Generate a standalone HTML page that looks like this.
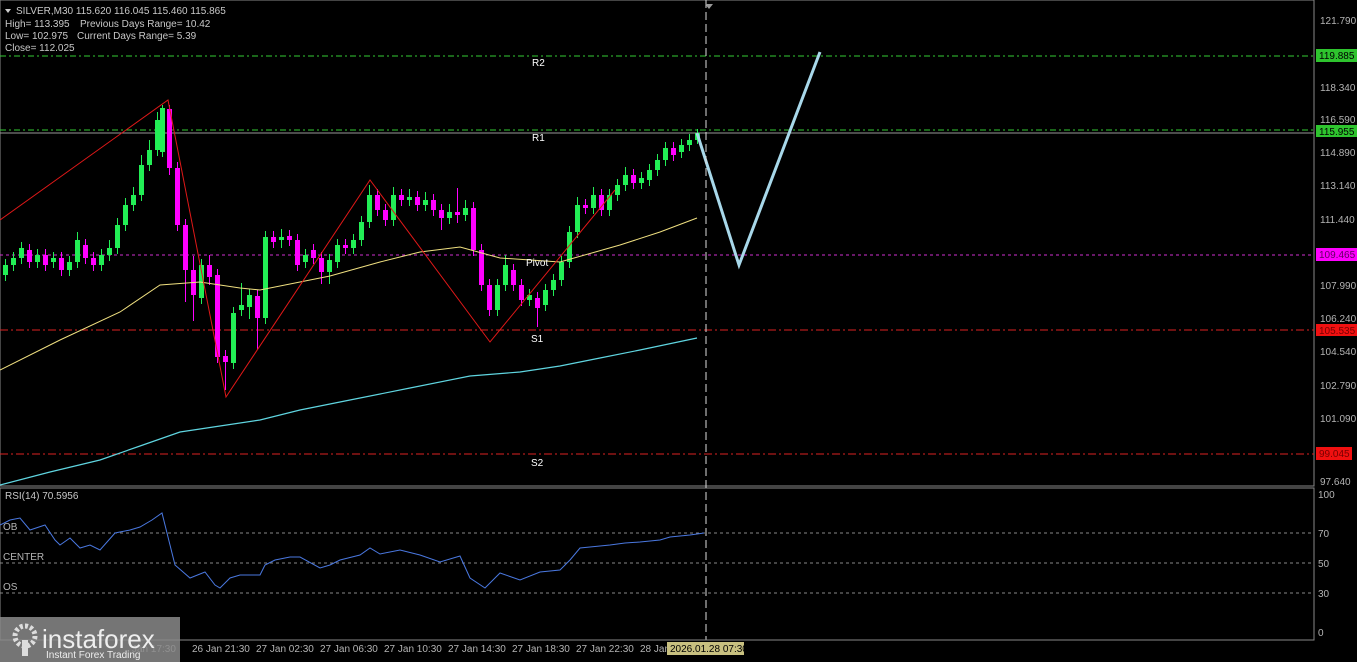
<!DOCTYPE html><html><head><meta charset="utf-8"><style>
body{margin:0;background:#000;width:1357px;height:662px;overflow:hidden;font-family:"Liberation Sans",sans-serif}
svg{position:absolute;left:0;top:0}
.t{fill:#c8c8c8;font-size:10px}
.ax{fill:#b4b4b4;font-size:10px}
</style></head><body>
<svg width="1357" height="662" xmlns="http://www.w3.org/2000/svg">
<rect x="0" y="0" width="1314" height="486" fill="none" stroke="#888" stroke-width="1"/>
<rect x="0" y="488" width="1314" height="152" fill="none" stroke="#888" stroke-width="1"/>
<line x1="0" x2="1314" y1="56" y2="56" stroke="#3c3" stroke-dasharray="6,3,2,3"/>
<line x1="0" x2="1314" y1="130" y2="130" stroke="#3c3" stroke-dasharray="6,3,2,3"/>
<line x1="0" x2="1314" y1="133" y2="133" stroke="#999"/>
<line x1="0" x2="1314" y1="255" y2="255" stroke="#d030d0" stroke-dasharray="3,3"/>
<line x1="0" x2="1314" y1="330" y2="330" stroke="#d22" stroke-dasharray="8,3,2,3"/>
<line x1="0" x2="1314" y1="454" y2="454" stroke="#d22" stroke-dasharray="8,3,2,3"/>
<g fill="#22ee55">
<rect x="3" y="265" width="5" height="10"/><rect x="5" y="259" width="1" height="22"/>
<rect x="11" y="258" width="5" height="7"/><rect x="13" y="252" width="1" height="19"/>
<rect x="19" y="248" width="5" height="10"/><rect x="21" y="242" width="1" height="22"/>
<rect x="35" y="255" width="5" height="7"/><rect x="37" y="249" width="1" height="19"/>
<rect x="51" y="258" width="5" height="4"/><rect x="53" y="252" width="1" height="16"/>
<rect x="67" y="262" width="5" height="8"/><rect x="69" y="256" width="1" height="20"/>
<rect x="75" y="240" width="5" height="22"/><rect x="77" y="232" width="1" height="36"/>
<rect x="99" y="255" width="5" height="10"/><rect x="101" y="249" width="1" height="22"/>
<rect x="107" y="248" width="5" height="7"/><rect x="109" y="240" width="1" height="21"/>
<rect x="115" y="225" width="5" height="23"/><rect x="117" y="218" width="1" height="36"/>
<rect x="123" y="205" width="5" height="20"/><rect x="125" y="198" width="1" height="33"/>
<rect x="131" y="195" width="5" height="10"/><rect x="133" y="187" width="1" height="24"/>
<rect x="139" y="165" width="5" height="30"/><rect x="141" y="155" width="1" height="46"/>
<rect x="147" y="150" width="5" height="15"/><rect x="149" y="140" width="1" height="31"/>
<rect x="155" y="120" width="5" height="30"/><rect x="157" y="112" width="1" height="44"/>
<rect x="160" y="108" width="5" height="44"/><rect x="162" y="105" width="1" height="52"/>
<rect x="199" y="265" width="5" height="33"/><rect x="201" y="259" width="1" height="45"/>
<rect x="231" y="313" width="5" height="50"/><rect x="233" y="307" width="1" height="62"/>
<rect x="239" y="305" width="5" height="5"/><rect x="241" y="283" width="1" height="33"/>
<rect x="247" y="295" width="5" height="12"/><rect x="249" y="289" width="1" height="30"/>
<rect x="263" y="237" width="5" height="81"/><rect x="265" y="231" width="1" height="93"/>
<rect x="279" y="237" width="5" height="3"/><rect x="281" y="229" width="1" height="19"/>
<rect x="303" y="255" width="5" height="7"/><rect x="305" y="249" width="1" height="19"/>
<rect x="327" y="260" width="5" height="12"/><rect x="329" y="254" width="1" height="30"/>
<rect x="335" y="245" width="5" height="17"/><rect x="337" y="239" width="1" height="29"/>
<rect x="351" y="240" width="5" height="8"/><rect x="353" y="234" width="1" height="20"/>
<rect x="359" y="222" width="5" height="18"/><rect x="361" y="216" width="1" height="30"/>
<rect x="367" y="195" width="5" height="27"/><rect x="369" y="185" width="1" height="43"/>
<rect x="391" y="195" width="5" height="25"/><rect x="393" y="187" width="1" height="39"/>
<rect x="407" y="197" width="5" height="3"/><rect x="409" y="189" width="1" height="17"/>
<rect x="423" y="200" width="5" height="5"/><rect x="425" y="192" width="1" height="19"/>
<rect x="447" y="212" width="5" height="6"/><rect x="449" y="204" width="1" height="20"/>
<rect x="463" y="208" width="5" height="7"/><rect x="465" y="200" width="1" height="21"/>
<rect x="495" y="285" width="5" height="25"/><rect x="497" y="279" width="1" height="37"/>
<rect x="503" y="265" width="5" height="20"/><rect x="505" y="255" width="1" height="36"/>
<rect x="527" y="295" width="5" height="5"/><rect x="529" y="289" width="1" height="17"/>
<rect x="543" y="290" width="5" height="15"/><rect x="545" y="284" width="1" height="27"/>
<rect x="551" y="280" width="5" height="10"/><rect x="553" y="274" width="1" height="22"/>
<rect x="559" y="262" width="5" height="18"/><rect x="561" y="256" width="1" height="30"/>
<rect x="567" y="232" width="5" height="30"/><rect x="569" y="226" width="1" height="42"/>
<rect x="575" y="205" width="5" height="27"/><rect x="577" y="197" width="1" height="41"/>
<rect x="591" y="195" width="5" height="13"/><rect x="593" y="187" width="1" height="27"/>
<rect x="607" y="195" width="5" height="15"/><rect x="609" y="189" width="1" height="27"/>
<rect x="615" y="185" width="5" height="10"/><rect x="617" y="179" width="1" height="22"/>
<rect x="623" y="175" width="5" height="10"/><rect x="625" y="167" width="1" height="24"/>
<rect x="639" y="178" width="5" height="5"/><rect x="641" y="172" width="1" height="17"/>
<rect x="647" y="170" width="5" height="10"/><rect x="649" y="164" width="1" height="22"/>
<rect x="655" y="160" width="5" height="10"/><rect x="657" y="154" width="1" height="22"/>
<rect x="663" y="148" width="5" height="12"/><rect x="665" y="142" width="1" height="24"/>
<rect x="679" y="145" width="5" height="7"/><rect x="681" y="139" width="1" height="19"/>
<rect x="687" y="140" width="5" height="5"/><rect x="689" y="134" width="1" height="17"/>
<rect x="695" y="133" width="5" height="7"/><rect x="697" y="129" width="1" height="15"/>
</g>
<g fill="#ff00ff">
<rect x="27" y="250" width="5" height="12"/><rect x="29" y="244" width="1" height="24"/>
<rect x="43" y="255" width="5" height="10"/><rect x="45" y="249" width="1" height="22"/>
<rect x="59" y="258" width="5" height="12"/><rect x="61" y="252" width="1" height="24"/>
<rect x="83" y="245" width="5" height="13"/><rect x="85" y="239" width="1" height="25"/>
<rect x="91" y="258" width="5" height="7"/><rect x="93" y="252" width="1" height="19"/>
<rect x="167" y="109" width="5" height="59"/><rect x="169" y="105" width="1" height="70"/>
<rect x="175" y="168" width="5" height="57"/><rect x="177" y="162" width="1" height="69"/>
<rect x="183" y="225" width="5" height="45"/><rect x="185" y="219" width="1" height="83"/>
<rect x="191" y="270" width="5" height="25"/><rect x="193" y="256" width="1" height="65"/>
<rect x="207" y="265" width="5" height="12"/><rect x="209" y="255" width="1" height="30"/>
<rect x="215" y="275" width="5" height="82"/><rect x="217" y="269" width="1" height="94"/>
<rect x="223" y="356" width="5" height="6"/><rect x="225" y="350" width="1" height="40"/>
<rect x="255" y="296" width="5" height="22"/><rect x="257" y="290" width="1" height="60"/>
<rect x="271" y="237" width="5" height="5"/><rect x="273" y="231" width="1" height="17"/>
<rect x="287" y="236" width="5" height="4"/><rect x="289" y="230" width="1" height="16"/>
<rect x="295" y="240" width="5" height="25"/><rect x="297" y="234" width="1" height="37"/>
<rect x="311" y="250" width="5" height="8"/><rect x="313" y="244" width="1" height="20"/>
<rect x="319" y="258" width="5" height="14"/><rect x="321" y="252" width="1" height="32"/>
<rect x="343" y="245" width="5" height="3"/><rect x="345" y="239" width="1" height="15"/>
<rect x="375" y="195" width="5" height="15"/><rect x="377" y="189" width="1" height="27"/>
<rect x="383" y="210" width="5" height="10"/><rect x="385" y="204" width="1" height="22"/>
<rect x="399" y="195" width="5" height="5"/><rect x="401" y="189" width="1" height="17"/>
<rect x="415" y="197" width="5" height="8"/><rect x="417" y="191" width="1" height="20"/>
<rect x="431" y="200" width="5" height="10"/><rect x="433" y="194" width="1" height="22"/>
<rect x="439" y="210" width="5" height="8"/><rect x="441" y="204" width="1" height="26"/>
<rect x="455" y="212" width="5" height="3"/><rect x="457" y="188" width="1" height="35"/>
<rect x="471" y="208" width="5" height="42"/><rect x="473" y="202" width="1" height="54"/>
<rect x="479" y="250" width="5" height="35"/><rect x="481" y="244" width="1" height="47"/>
<rect x="487" y="285" width="5" height="25"/><rect x="489" y="279" width="1" height="37"/>
<rect x="511" y="270" width="5" height="15"/><rect x="513" y="264" width="1" height="27"/>
<rect x="519" y="285" width="5" height="15"/><rect x="521" y="279" width="1" height="27"/>
<rect x="535" y="298" width="5" height="10"/><rect x="537" y="292" width="1" height="35"/>
<rect x="583" y="205" width="5" height="3"/><rect x="585" y="199" width="1" height="15"/>
<rect x="599" y="195" width="5" height="15"/><rect x="601" y="189" width="1" height="27"/>
<rect x="631" y="175" width="5" height="8"/><rect x="633" y="169" width="1" height="20"/>
<rect x="671" y="148" width="5" height="7"/><rect x="673" y="142" width="1" height="19"/>
</g>
<polyline fill="none" stroke="#f0e080" stroke-width="1" points="0,370 60,340 120,312 160,285 200,282 240,288 260,290 300,282 330,276 380,262 420,252 460,247 500,258 560,262 620,245 660,232 697,218"/>
<polyline fill="none" stroke="#5fd5e0" stroke-width="1.2" points="0,485 50,472 100,460 140,446 180,432 220,426 260,420 300,410 350,400 410,388 470,376 520,372 560,366 600,358 640,350 697,338"/>
<polyline fill="none" stroke="#e01818" stroke-width="1" points="0,220 168,100 226,397 370,180 490,342 615,190"/>
<polyline fill="none" stroke="#a8d8ea" stroke-width="3" points="697,133 739,265 820,52"/>
<line x1="706" x2="706" y1="0" y2="640" stroke="#ddd" stroke-dasharray="8,4"/>
<polygon points="705,4 713,4 709,9" fill="#999"/>
<g fill="#fff" font-size="10"><text x="532" y="66">R2</text><text x="532" y="141">R1</text><text x="526" y="266">Pivot</text><text x="531" y="342">S1</text><text x="531" y="466">S2</text></g>
<polygon points="5,9 11,9 8,13" fill="#ccc"/>
<text class="t" x="16" y="14">SILVER,M30  115.620 116.045 115.460 115.865</text>
<text class="t" x="5" y="27">High= 113.395</text><text class="t" x="80" y="27">Previous Days Range= 10.42</text>
<text class="t" x="5" y="39">Low= 102.975</text><text class="t" x="77" y="39">Current Days Range= 5.39</text>
<text class="t" x="5" y="51">Close= 112.025</text>
<g class="ax">
<text x="1320" y="24">121.790</text><text x="1320" y="91">118.340</text><text x="1320" y="123">116.590</text>
<text x="1320" y="156">114.890</text><text x="1320" y="189">113.140</text><text x="1320" y="223">111.440</text>
<text x="1320" y="289">107.990</text><text x="1320" y="322">106.240</text><text x="1320" y="355">104.540</text>
<text x="1320" y="389">102.790</text><text x="1320" y="422">101.090</text><text x="1320" y="455">99.340</text>
<text x="1320" y="485">97.640</text>
<text x="1318" y="498">100</text><text x="1318" y="537">70</text><text x="1318" y="567">50</text><text x="1318" y="597">30</text><text x="1318" y="636">0</text>
</g>
<rect x="1316" y="49" width="41" height="13" fill="#2ec42e"/><text x="1319" y="59" font-size="10" fill="#000">119.885</text>
<rect x="1316" y="125" width="41" height="12" fill="#2ec42e"/><text x="1319" y="135" font-size="10" fill="#000">115.955</text>
<rect x="1316" y="248" width="41" height="13" fill="#f0f"/><text x="1319" y="258" font-size="10" fill="#600060">109.465</text>
<rect x="1316" y="324" width="41" height="12" fill="#f01010"/><text x="1319" y="334" font-size="10" fill="#700">105.535</text>
<rect x="1316" y="447" width="36" height="13" fill="#f01010"/><text x="1319" y="457" font-size="10" fill="#700">99.045</text>
<text class="t" x="5" y="499">RSI(14) 70.5956</text>
<g stroke="#888" stroke-dasharray="3,3"><line x1="0" x2="1314" y1="533" y2="533"/><line x1="0" x2="1314" y1="563" y2="563"/><line x1="0" x2="1314" y1="593" y2="593"/></g>
<g class="ax"><text x="3" y="530">OB</text><text x="3" y="560">CENTER</text><text x="3" y="590">OS</text></g>
<polyline fill="none" stroke="#4a78e0" stroke-width="1" points="0,525 10,520 20,518 30,530 45,525 55,540 60,545 70,538 80,548 90,545 100,550 115,533 130,530 140,527 152,520 162,513 170,545 175,565 190,578 205,572 215,585 220,588 230,578 240,575 260,575 265,565 275,560 290,557 300,557 320,568 330,565 340,560 360,555 370,548 380,554 400,550 420,555 440,562 460,556 470,578 485,588 500,573 520,580 540,572 560,570 570,560 580,548 600,546 610,545 625,543 640,542 660,540 670,537 690,535 704,533"/>
<line x1="0" x2="1314" y1="640" y2="640" stroke="#888"/>
<g class="ax"><text x="132" y="652">Jan 17:30</text><text x="192" y="652">26 Jan 21:30</text><text x="256" y="652">27 Jan 02:30</text><text x="320" y="652">27 Jan 06:30</text><text x="384" y="652">27 Jan 10:30</text><text x="448" y="652">27 Jan 14:30</text><text x="512" y="652">27 Jan 18:30</text><text x="576" y="652">27 Jan 22:30</text><text x="640" y="652">28 Jan</text></g>
<rect x="667" y="642" width="77" height="13" fill="#c8c080"/><text x="670" y="652" font-size="10" fill="#000">2026.01.28 07:30</text>
<rect x="0" y="617" width="180" height="45" fill="#8a8a8a" opacity="0.85"/>
<circle cx="25" cy="636" r="10" fill="none" stroke="#ddd" stroke-width="5" stroke-dasharray="3,2.2"/><rect x="22" y="640" width="6" height="16" fill="#ddd"/>
<text x="42" y="648" font-size="26" fill="#eee">instaforex</text>
<text x="46" y="658" font-size="10" fill="#eee">Instant Forex Trading</text>
</svg>
</body></html>
